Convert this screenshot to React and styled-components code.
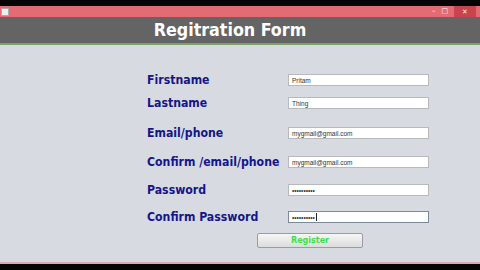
import React from 'react'
import styled, {createGlobalStyle} from 'styled-components'

const GlobalStyle = createGlobalStyle`
  html, body {
    margin: 0;
    padding: 0;
    background: #000;
  }
  body {
    font-family: "DejaVu Sans Condensed", "DejaVu Sans", Verdana, sans-serif;
  }
`

const Screen = styled.div`
  width: 480px;
  height: 270px;
  display: flex;
  flex-direction: column;
  background: #000;
  overflow: hidden;
`

const EdgeGap = styled.div`
  height: 6px;
  background: #050505;
  flex-shrink: 0;
`

const TitleBar = styled.div`
  height: 11px;
  background: #e26b74;
  display: flex;
  align-items: center;
  justify-content: space-between;
  padding: 0 4px 0 1px;
`

const AppIcon = styled.div`
  width: 6px;
  height: 6px;
  background: #eee;
  border: 1px solid #aaa;
`

const WinButtons = styled.div`
  display: flex;
  align-items: center;
  gap: 6px;
  height: 100%;
`

const WinBtn = styled.span`
  font-family: "DejaVu Sans", sans-serif;
  font-size: 7px;
  color: #fff;
  line-height: 1;
`

const CloseBtn = styled.span`
  background: #c9444f;
  height: 100%;
  width: 22px;
  display: flex;
  align-items: center;
  justify-content: center;
  font-size: 7px;
  color: #fff;
`

const Header = styled.div`
  height: 26px;
  background: #646464;
  border-bottom: 2px solid #79a26e;
  display: flex;
  align-items: center;
  justify-content: center;
  color: #fff;
  font-weight: bold;
  font-size: 17.7px;
  padding-right: 20px;
`

const Body = styled.div`
  flex: 1;
  background: #d7dae1;
  border-bottom: 2px solid #d9a9b4;
  padding-top: 27px;
  display: flex;
  flex-direction: column;
`

const Row = styled.div`
  display: grid;
  grid-template-columns: 141px 141px;
  align-items: center;
  height: 16px;
  margin-top: ${p => p.$gap}px;
  padding-left: 147px;
`

const Label = styled.span`
  color: #15158a;
  font-weight: bold;
  font-size: 12.2px;
  white-space: nowrap;
`

const Field = styled.div`
  height: 12px;
  background: #fff;
  border: 1px solid ${p => (p.$focus ? '#7a8a9a' : '#b7b9bd')};
  font-family: "Liberation Sans", Arial, sans-serif;
  font-size: 6.5px;
  color: #333;
  display: flex;
  align-items: center;
  padding-left: 3px;
  box-sizing: border-box;
`

const Caret = styled.span`
  display: inline-block;
  width: 1px;
  height: 8px;
  background: #222;
  margin-left: 1px;
`

const ButtonRow = styled.div`
  display: flex;
  margin-top: 8px;
  padding-left: 257px;
`

const RegisterButton = styled.button`
  width: 106px;
  height: 15px;
  padding: 0;
  border: 1px solid #9a9ca0;
  border-radius: 2px;
  background: linear-gradient(#f6f6f6, #dcdcdc);
  color: #3ee04a;
  font-family: "DejaVu Sans", Verdana, sans-serif;
  font-weight: bold;
  font-size: 8px;
`

const rows = [
  {label: 'Firstname', value: 'Pritam', gap: 0},
  {label: 'Lastname', value: 'Thing', gap: 7},
  {label: 'Email/phone', value: 'mygmail@gmail.com', gap: 14},
  {label: 'Confirm /email/phone', value: 'mygmail@gmail.com', gap: 13},
  {label: 'Password', value: '••••••••••', gap: 12},
  {label: 'Confirm Password', value: '••••••••••', gap: 11, focus: true},
]

const App = () => (
  <Screen>
    <GlobalStyle/>
    <EdgeGap/>
    <TitleBar>
      <AppIcon/>
      <WinButtons>
        <WinBtn>–</WinBtn>
        <WinBtn>□</WinBtn>
        <CloseBtn>✕</CloseBtn>
      </WinButtons>
    </TitleBar>
    <Header>Regitration Form</Header>
    <Body>
      {rows.map(r => (
        <Row key={r.label} $gap={r.gap}>
          <Label>{r.label}</Label>
          <Field $focus={r.focus}>
            {r.value}
            {r.focus && <Caret/>}
          </Field>
        </Row>
      ))}
      <ButtonRow>
        <RegisterButton>Register</RegisterButton>
      </ButtonRow>
    </Body>
    <EdgeGap/>
  </Screen>
)

export default App
